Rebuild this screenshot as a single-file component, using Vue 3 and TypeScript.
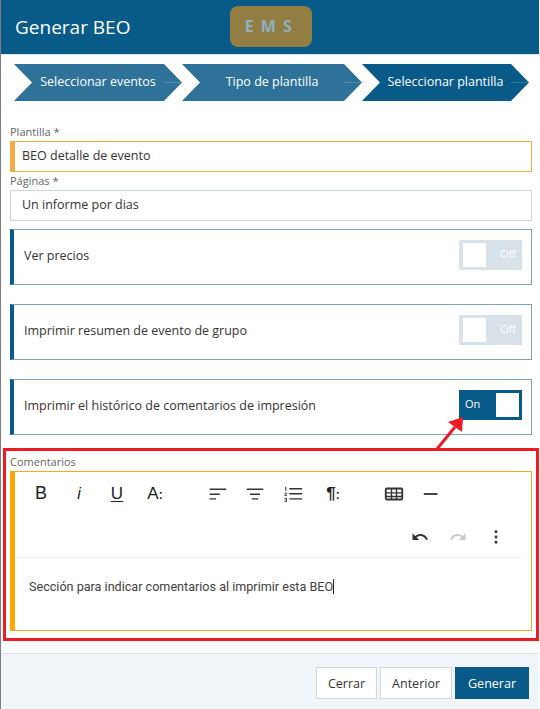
<template>
  <div class="dialog">
    <header class="head">
      <h1>Generar BEO</h1>
      <div class="watermark">E M S</div>
    </header>

    <nav class="steps">
      <div v-for="s in steps" :key="s.label" class="step" :class="{ current: s.current }" :style="{ width: s.width + 'px' }">
        <span>{{ s.label }}</span>
        <i class="step-line"></i>
      </div>
    </nav>

    <main class="body">
      <label class="lbl">Plantilla *</label>
      <div class="input required">BEO detalle de evento</div>
      <label class="lbl lbl-tight">Páginas *</label>
      <div class="input">Un informe por dias</div>

      <div v-for="o in options" :key="o.label" class="option">
        <span>{{ o.label }}</span>
        <div class="switch" :class="{ on: o.on }">
          <b>{{ o.on ? 'On' : 'Off' }}</b>
          <i class="knob"></i>
        </div>
      </div>

      <label class="lbl lbl-comments">Comentarios</label>
      <div class="editor">
        <div class="toolbar">
          <div class="tool-row">
            <span class="tool t-b">B</span>
            <span class="tool t-i">i</span>
            <span class="tool t-u">U</span>
            <span class="tool t-a">A<em>:</em></span>
            <svg class="ico gap-l" viewBox="0 0 24 24"><path d="M4 6h18v1.500H4zM4 11.500h11V13H4zM4 16.500h7V18H4z" /></svg>
            <svg class="ico" viewBox="0 0 24 24"><path d="M3 6h18v1.500H3zM6.500 11.500h11V13h-11zM8.500 16.500h7V18h-7z" /></svg>
            <svg class="ico" viewBox="0 0 24 24"><path d="M8 5.500h14V7H8zM8 11h14v1.500H8zM8 16.500h14V18H8zM3.500 4h1.200v4.500H3.500zM2.500 10.500h3v1l-1.800 1.700h1.800v.8h-3v-1l1.800-1.700H2.500zM2.500 16h3v4.500h-3v-.8h2v-1h-1.500v-.7h1.500v-1.200h-2z" /></svg>
            <span class="tool t-p">¶<em>:</em></span>
            <svg class="ico gap-m" viewBox="0 0 24 24"><path fill-rule="evenodd" d="M4 5h16a2 2 0 0 1 2 2v10a2 2 0 0 1-2 2H4a2 2 0 0 1-2-2V7a2 2 0 0 1 2-2zm0 2v3h4.500V7zm6 0v3h4V7zm5.500 0v3H20V7zM4 11.500v2.500h4.500v-2.500zm6 0v2.500h4v-2.500zm5.500 0v2.500H20v-2.500zM4 15.500V17h4.500v-1.500zm6 0V17h4v-1.500zm5.500 0V17H20v-1.500z" /></svg>
            <svg class="ico" viewBox="0 0 24 24"><path d="M3 11h15v2H3z" /></svg>
          </div>
          <div class="tool-row tool-row-end">
            <svg class="ico small" viewBox="0 0 24 24"><path d="M12.500 8c-2.650 0-5.050 1-6.900 2.600L2 7v9h9l-3.620-3.620c1.390-1.160 3.160-1.880 5.120-1.880 3.540 0 6.550 2.310 7.600 5.500l2.370-.78C21.080 11.030 17.150 8 12.500 8z" /></svg>
            <svg class="ico small muted" viewBox="0 0 24 24"><path d="M18.400 10.600C16.550 9 14.150 8 11.500 8c-4.650 0-8.580 3.030-9.960 7.220L3.900 16c1.050-3.190 4.050-5.500 7.600-5.500 1.950 0 3.730.72 5.120 1.880L13 16h9V7z" /></svg>
            <svg class="ico small" viewBox="0 0 24 24"><circle cx="12" cy="5" r="1.900" /><circle cx="12" cy="12" r="1.900" /><circle cx="12" cy="19" r="1.900" /></svg>
          </div>
        </div>
        <p class="editor-text">Sección para indicar comentarios al imprimir esta BEO<i class="caret"></i></p>
      </div>
    </main>

    <footer class="foot">
      <button class="btn">Cerrar</button>
      <button class="btn">Anterior</button>
      <button class="btn primary">Generar</button>
    </footer>

    <!-- anotaciones encima de la captura -->
    <div class="red-box"></div>
    <svg class="red-arrow" viewBox="0 0 40 44"><path d="M3 37 L21 15" stroke="#ed1c24" stroke-width="3" fill="none" /><path d="M29 5 L28 20 L14 10 Z" fill="#ed1c24" /></svg>
  </div>
</template>

<script setup lang="ts">
const steps = [
  { label: 'Seleccionar eventos', width: 168 },
  { label: 'Tipo de plantilla', width: 180 },
  { label: 'Seleccionar plantilla', width: 167, current: true },
];

const options = [
  { label: 'Ver precios', on: false },
  { label: 'Imprimir resumen de evento de grupo', on: false },
  { label: 'Imprimir el histórico de comentarios de impresión', on: true },
];
</script>

<style>
html, body { margin: 0; background: #fff; }
</style>

<style scoped>
.dialog {
  position: relative;
  box-sizing: border-box;
  width: 539px;
  height: 709px;
  border-left: 1px solid #7d7d7d;
  display: flex;
  flex-direction: column;
  background: #fff;
  font-family: "Open Sans", sans-serif;
  color: #333;
  overflow: hidden;
}
.head {
  position: relative;
  flex: none;
  box-sizing: border-box;
  height: 55px;
  background: #085a88;
  border-bottom: 1px solid #d9e2e8;
  display: flex;
  align-items: center;
  padding-left: 14px;
}
.head h1 { margin: 0; font-size: 19px; font-weight: 400; color: #fff; }
.watermark {
  position: absolute;
  left: 229px;
  top: 6px;
  width: 82px;
  height: 41px;
  border-radius: 8px;
  background: #927d42;
  color: #8fb0c0;
  font-weight: 700;
  font-size: 16px;
  line-height: 41px;
  text-align: center;
  letter-spacing: 1.5px;
  text-indent: -4px;
}
.steps { flex: none; display: flex; padding: 9px 0 0 13px; height: 37px; }
.step {
  position: relative;
  box-sizing: border-box;
  height: 37px;
  background: #2e7299;
  color: #fff;
  font-size: 12.500px;
  display: flex;
  align-items: center;
  justify-content: center;
  padding: 0 14px 2px;
  clip-path: polygon(0 0, calc(100% - 18px) 0, 100% 50%, calc(100% - 18px) 100%, 0 100%, 18px 50%);
}
.step.current { background: #085a88; }
.step-line {
  position: absolute;
  right: 0;
  top: 18px;
  width: 18px;
  height: 1px;
  background: rgba(255, 255, 255, 0.18);
}
.body { flex: 1; padding: 25px 7px 0 9px; display: flex; flex-direction: column; }
.lbl { font-size: 11px; line-height: 12px; color: #666; height: 15px; }
.lbl-tight { margin-top: 3px; }
.input {
  box-sizing: border-box;
  height: 31px;
  border: 1px solid #ccd6de;
  padding-left: 11px;
  font-size: 12.500px;
  line-height: 27px;
  color: #333;
}
.input.required { border-color: #f2ab47; border-left-width: 5px; padding-left: 7px; }
.option {
  box-sizing: border-box;
  flex: none;
  height: 56px;
  margin-top: 8px;
  margin-bottom: 11px;
  border: 1px solid #7ba7c1;
  border-left: 4px solid #085a88;
  display: flex;
  align-items: center;
  justify-content: space-between;
  padding: 0 9px 4px 10px;
  font-size: 12.500px;
}
.switch {
  position: relative;
  box-sizing: border-box;
  flex: none;
  width: 63px;
  height: 30px;
  background: #d8e2e8;
}
.switch b { font-weight: 400; font-size: 11px; line-height: 30px; color: #fff; position: absolute; right: 6px; top: -1px; }
.knob { width: 23px; height: 24px; background: #fff; position: absolute; left: 4px; top: 3px; }
.switch.on { background: #085a88; }
.switch.on b { left: 6px; right: auto; }
.switch.on .knob { left: auto; right: 3px; }
.lbl-comments { margin-top: 7px; height: 18px; line-height: 18px; }
.editor {
  box-sizing: border-box;
  height: 160px;
  border: 1px solid #f9a825;
  border-left: 5px solid #ffa600;
  display: flex;
  flex-direction: column;
}
.toolbar { box-sizing: border-box; margin-left: 3px; border-bottom: 1px solid #eee; height: 86px; width: 505px; }
.tool-row { display: flex; align-items: center; height: 43px; padding-left: 4px; }
.tool-row-end { justify-content: flex-end; gap: 20px; padding-right: 18px; padding-top: 2px; height: 41px; box-sizing: border-box; }
.tool {
  width: 38px;
  flex: none;
  font-family: "Liberation Sans", sans-serif;
  text-align: center;
  font-size: 16px;
  color: #222;
  box-sizing: border-box;
}
.tool em { font-style: normal; font-weight: 700; font-size: 12px; }
.t-b { font-size: 18px; }
.t-i { font-style: italic; }
.t-u { text-decoration: underline; text-underline-offset: 2px; font-size: 17px; }
.t-a { font-size: 17px; }
.t-p { font-size: 17px; font-weight: 700; width: 26px; }
.ico { width: 22px; height: 22px; flex: none; fill: #333; margin-right: 16px; }
.ico.small { width: 18px; height: 18px; margin-right: 0; }
.ico.muted { fill: #c9c9c9; }
.gap-l { margin-left: 32px; }
.gap-m { margin-left: 37px; }
.editor-text {
  margin: 0;
  padding: 20px 0 0 14px;
  font-family: Roboto, "Liberation Sans", sans-serif;
  font-size: 12.600px;
  line-height: 18px;
  color: #414141;
}
.caret { display: inline-block; width: 1px; height: 15px; background: #222; vertical-align: -3px; }
.foot {
  flex: none;
  box-sizing: border-box;
  height: 56px;
  background: #f0f5f9;
  border-top: 1px solid #dfe5ea;
  display: flex;
  justify-content: flex-end;
  gap: 3px;
  padding: 13px 10px 0 0;
}
.btn {
  box-sizing: border-box;
  height: 32px;
  padding: 0 11px;
  background: #fff;
  border: 1px solid #cfd8df;
  font-family: inherit;
  font-size: 12.500px;
  color: #333;
}
.btn.primary { background: #085a88; border-color: #085a88; color: #fff; padding: 0 12px; }
.red-box {
  position: absolute;
  left: 2px;
  top: 448px;
  width: 530px;
  height: 187px;
  border: 3px solid #ed1c24;
  box-sizing: content-box;
  pointer-events: none;
}
.red-arrow { position: absolute; left: 433px; top: 412px; width: 40px; height: 44px; }
</style>
